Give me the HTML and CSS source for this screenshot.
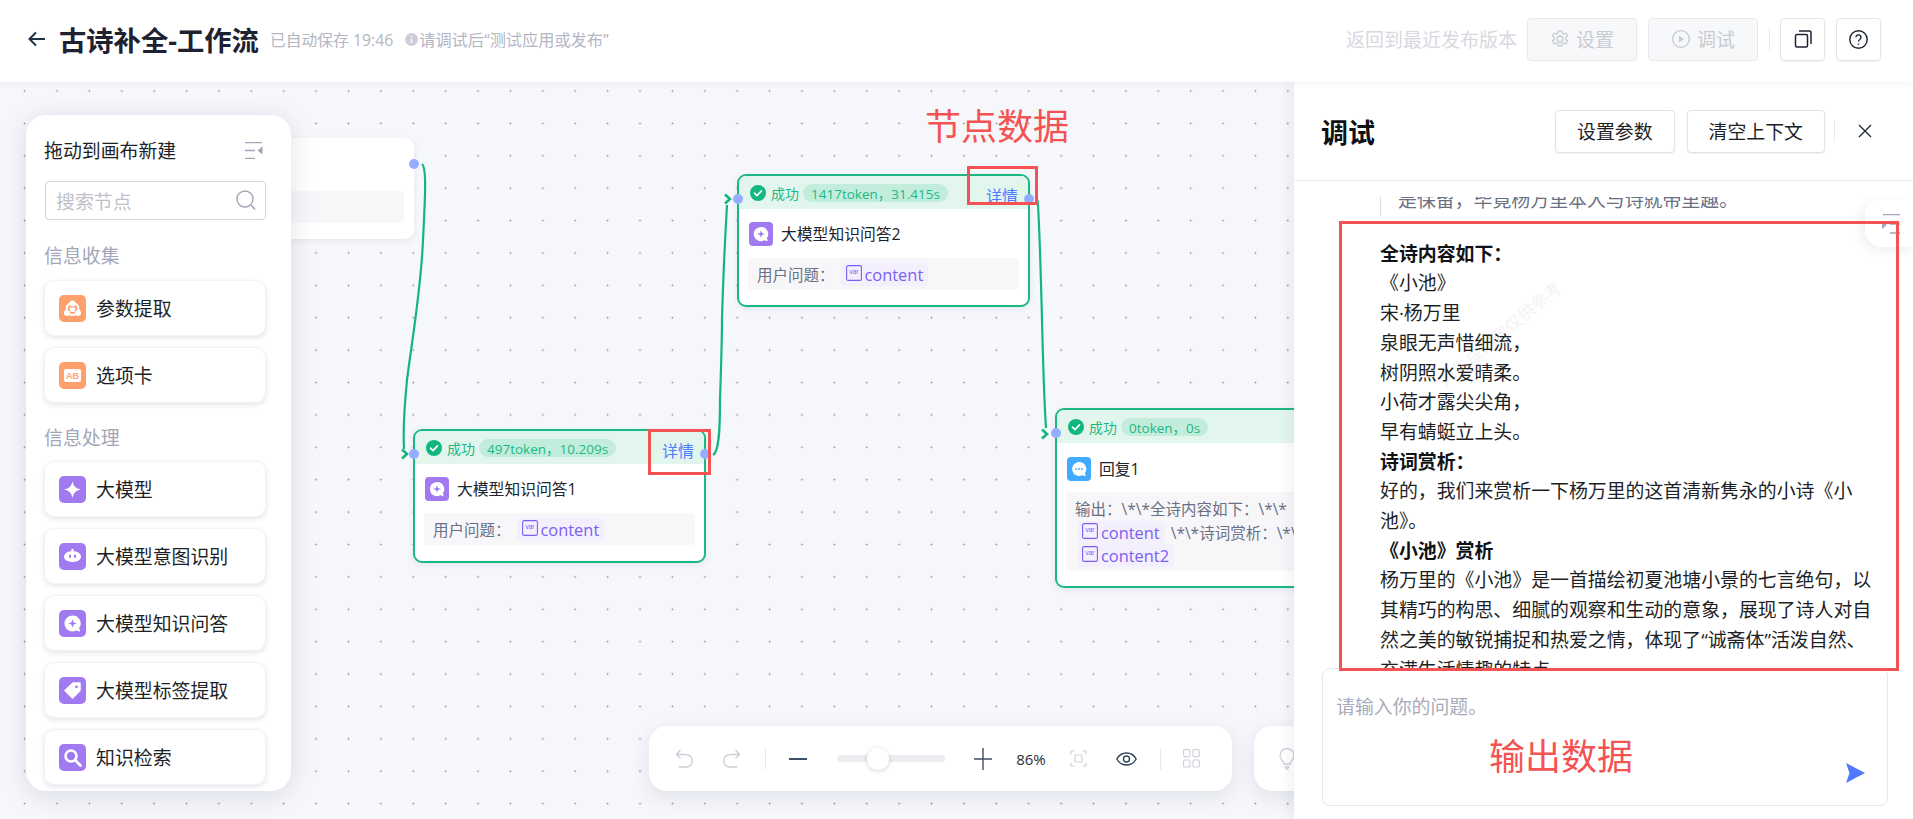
FILE: index.html
```html
<!DOCTYPE html>
<html lang="zh-CN">
<head>
<meta charset="utf-8">
<title>古诗补全-工作流</title>
<link rel="stylesheet" href="styles.css">
</head>
<body>
<svg class="sprite" width="0" height="0">
  <defs>
    <symbol id="qa" viewBox="0 0 27 27"><path d="M13.5 5.5a8 8 0 1 0 3.6 15.1l4 1.1-.9-3.6a8 8 0 0 0-6.700-12.600z" fill="#fff"/><path d="M13.500 9.200l1.100 3.200 3.200 1.100-3.200 1.100-1.100 3.200-1.100-3.200-3.200-1.100 3.200-1.100z" fill="#a179f0"/></symbol>
    <symbol id="var" viewBox="0 0 16 16"><rect x=".6" y=".6" width="14.800" height="14.800" rx="1.500" fill="none" stroke="#7b5ff0" stroke-width="1.100"/><text x="8" y="8.500" text-anchor="middle" font-size="6.500" font-family="Liberation Sans" fill="#7b5ff0">var</text></symbol>
    <symbol id="check" viewBox="0 0 16 16"><circle cx="8" cy="8" r="8" fill="#14b67f"/><path d="M4.500 8.200l2.500 2.400 4.500-4.700" fill="none" stroke="#fff" stroke-width="1.600" stroke-linecap="round" stroke-linejoin="round"/></symbol>
  </defs>
</svg>

<header class="topbar">
  <svg class="back" width="18" height="16" viewBox="0 0 18 16"><path d="M17 8H1.500M8 1.500L1.500 8 8 14.500" fill="none" stroke="#1d3147" stroke-width="2"/></svg>
  <h1 class="app-title">古诗补全-工作流</h1>
  <span class="save-time">已自动保存 19:46</span>
  <svg class="info" width="13" height="13" viewBox="0 0 13 13"><circle cx="6.500" cy="6.500" r="6.500" fill="#ccced9"/><path d="M6.500 3v1.200M6.500 5.500V10" stroke="#fff" stroke-width="1.300"/></svg>
  <span class="save-hint">请调试后“测试应用或发布”</span>
  <span class="revert">返回到最近发布版本</span>
  <button class="tb-btn">
    <svg width="20" height="20" viewBox="0 0 20 20" fill="none" stroke="#c6c8d2" stroke-width="1.300"><circle cx="10" cy="10" r="3"/><path d="M8.400 1.800h3.200l.5 2.400 1.500.8 2.300-.8 1.600 2.800-1.800 1.600v1.800l1.800 1.600-1.600 2.800-2.300-.8-1.500.8-.5 2.400H8.400l-.5-2.400-1.500-.8-2.300.8-1.600-2.800 1.800-1.600V8.600L2.500 7l1.600-2.800 2.300.8 1.500-.8z" stroke-linejoin="round"/></svg>
    设置
  </button>
  <button class="tb-btn">
    <svg width="20" height="20" viewBox="0 0 20 20"><circle cx="10" cy="10" r="8.300" fill="none" stroke="#c6c8d2" stroke-width="1.300"/><path d="M8 6.500l5 3.500-5 3.500z" fill="#c6c8d2"/></svg>
    调试
  </button>
  <i class="vline tb-line"></i>
  <button class="icon-btn">
    <svg width="18" height="18" viewBox="0 0 18 18" fill="none" stroke="#1d2433" stroke-width="1.500"><rect x="1.500" y="4.500" width="12" height="12.500" rx="1.500"/><path d="M5 1h10.500A1.500 1.500 0 0 1 17 2.500V14"/></svg>
  </button>
  <button class="icon-btn">
    <svg width="19" height="19" viewBox="0 0 19 19" fill="none" stroke="#1d2433" stroke-width="1.400"><circle cx="9.500" cy="9.500" r="8.700"/><path d="M7 7.300a2.500 2.500 0 1 1 3.800 2.200c-.9.500-1.300 1-1.300 2.100M9.500 13.400v1.400"/></svg>
  </button>
</header>

<main class="workspace">
  <section class="canvas">
    <svg class="edges" width="1294" height="737" viewBox="0 82 1294 737" fill="none" stroke="#14b67f" stroke-width="2.200">
      <path d="M422 164C427 168 425 200 423 240C421 290 412 340 407 380C404 410 403 430 404 449"/>
      <path d="M402 449.500l5 4.500-5 4.500" stroke-width="2.600"/>
      <path d="M713 455C719 452 720 430 720 400C721 370 722 340 722 320C723 280 725 240 727 205"/>
      <path d="M725 194.500l5 4.500-5 4.500" stroke-width="2.600"/>
      <path d="M1036 198C1038 200 1038 203 1038 205C1040 240 1041 280 1042 320C1043 360 1044 400 1046 428"/>
      <path d="M1042 429.500l5 4.500-5 4.500" stroke-width="2.600"/>
    </svg>

    <div class="node node-ghost">
      <div class="param-row ghost-row"></div>
      <i class="port port-r"></i>
    </div>

    <article class="node node-qa1 done">
      <div class="node-status">
        <svg width="16" height="16"><use href="#check"/></svg>
        <span class="status-label">成功</span>
        <span class="status-pill">497token，10.209s</span>
        <span class="details">详情</span>
      </div>
      <div class="node-head">
        <svg class="node-ico purple" width="24" height="24"><use href="#qa"/></svg>
        <span class="node-title">大模型知识问答1</span>
      </div>
      <div class="param-row">
        <span>用户问题：</span>
        <span class="var-tag"><svg width="16" height="16"><use href="#var"/></svg>content</span>
      </div>
      <i class="port port-l"></i><i class="port port-r"></i>
    </article>

    <article class="node node-qa2 done">
      <div class="node-status">
        <svg width="16" height="16"><use href="#check"/></svg>
        <span class="status-label">成功</span>
        <span class="status-pill">1417token，31.415s</span>
        <span class="details">详情</span>
      </div>
      <div class="node-head">
        <svg class="node-ico purple" width="24" height="24"><use href="#qa"/></svg>
        <span class="node-title">大模型知识问答2</span>
      </div>
      <div class="param-row">
        <span>用户问题：</span>
        <span class="var-tag"><svg width="16" height="16"><use href="#var"/></svg>content</span>
      </div>
      <i class="port port-l"></i><i class="port port-r"></i>
    </article>

    <article class="node node-reply done">
      <div class="node-status">
        <svg width="16" height="16"><use href="#check"/></svg>
        <span class="status-label">成功</span>
        <span class="status-pill">0token，0s</span>
      </div>
      <div class="node-head">
        <svg class="node-ico blue" width="24" height="24" viewBox="0 0 24 24"><path d="M12 5a7 7 0 1 0 3.200 13.300l3.600 1-.9-3.200A7 7 0 0 0 12 5z" fill="#fff"/><circle cx="9" cy="12" r="1" fill="#42aaff"/><circle cx="12" cy="12" r="1" fill="#42aaff"/><circle cx="15" cy="12" r="1" fill="#42aaff"/></svg>
        <span class="node-title">回复1</span>
      </div>
      <div class="param-row reply-row">
        <div class="reply-line first">输出：\*\*全诗内容如下：\*\*</div>
        <div class="reply-line"><span class="var-tag"><svg width="16" height="16"><use href="#var"/></svg>content</span><span class="after-tag">\*\*诗词赏析：\*\*</span></div>
        <div class="reply-line"><span class="var-tag"><svg width="16" height="16"><use href="#var"/></svg>content2</span></div>
      </div>
      <i class="port port-l"></i>
    </article>

    <aside class="palette">
      <div class="palette-head">
        <span>拖动到画布新建</span>
        <svg width="18" height="17" viewBox="0 0 18 17" fill="none" stroke="#a2a6b8" stroke-width="1.300"><path d="M0 .7h17M0 8.500h10M0 16.300h10"/><path d="M17.500 4.500v8L12.500 8.500z" fill="#a2a6b8" stroke="none"/></svg>
      </div>
      <div class="search">
        <span>搜索节点</span>
        <svg width="20" height="21" viewBox="0 0 20 21" fill="none" stroke="#a2a6b8" stroke-width="1.400"><circle cx="9" cy="9" r="8"/><path d="M15 15l4 4.500"/></svg>
      </div>
      <h2 class="group-title">信息收集</h2>
      <div class="tool">
        <svg class="tool-ico orange" width="27" height="27" viewBox="0 0 27 27"><circle cx="13.500" cy="14" r="6" fill="none" stroke="#fff" stroke-width="2.200"/><circle cx="13.500" cy="8.500" r="3" fill="#fff"/><circle cx="8" cy="18" r="3" fill="#fff"/><circle cx="19" cy="18" r="3" fill="#fff"/><path d="M10.500 12.500h6l-1 4.500h-4z" fill="#fff"/></svg>
        <span>参数提取</span>
      </div>
      <div class="tool">
        <svg class="tool-ico orange" width="27" height="27" viewBox="0 0 27 27"><rect x="5" y="7" width="17" height="13" rx="2" fill="#fff"/><text x="13.500" y="17" text-anchor="middle" font-size="9" font-weight="700" font-family="Liberation Sans" fill="#ffa574">AB</text></svg>
        <span>选项卡</span>
      </div>
      <h2 class="group-title second">信息处理</h2>
      <div class="tool">
        <svg class="tool-ico purple" width="27" height="27" viewBox="0 0 27 27"><path d="M13.500 5c.8 5 3.500 7.700 8.500 8.500-5 .8-7.700 3.500-8.500 8.500-.8-5-3.500-7.700-8.500-8.500 5-.8 7.700-3.500 8.500-8.500z" fill="#fff"/></svg>
        <span>大模型</span>
      </div>
      <div class="tool">
        <svg class="tool-ico purple" width="27" height="27" viewBox="0 0 27 27"><circle cx="13.500" cy="7" r="1.300" fill="#fff"/><path d="M13.500 8c5 0 8.500 2.800 8.500 5.800s-3.500 5.200-8.500 5.200S5 16.800 5 13.800 8.500 8 13.500 8z" fill="#fff"/><rect x="10" y="11.500" width="2" height="3.500" rx="1" fill="#a179f0"/><rect x="15" y="11.500" width="2" height="3.500" rx="1" fill="#a179f0"/></svg>
        <span>大模型意图识别</span>
      </div>
      <div class="tool">
        <svg class="tool-ico purple" width="27" height="27"><use href="#qa"/></svg>
        <span>大模型知识问答</span>
      </div>
      <div class="tool">
        <svg class="tool-ico purple" width="27" height="27" viewBox="0 0 27 27"><path d="M14 6h7v7.500L13.500 21 6 13.500z" fill="#fff" stroke="#fff" stroke-width="1.500" stroke-linejoin="round"/><circle cx="17.500" cy="9.800" r="1.400" fill="#a179f0"/></svg>
        <span>大模型标签提取</span>
      </div>
      <div class="tool">
        <svg class="tool-ico purple" width="27" height="27" viewBox="0 0 27 27"><circle cx="12" cy="12" r="5.500" fill="none" stroke="#fff" stroke-width="2.600"/><path d="M16.500 16.500l5 5" stroke="#fff" stroke-width="2.800" stroke-linecap="round"/></svg>
        <span>知识检索</span>
      </div>
    </aside>

    <div class="toolbar">
      <svg class="t-undo" width="18" height="20" viewBox="0 0 18 20" fill="none" stroke="#ccced8" stroke-width="1.300"><path d="M5.500 1L1.500 5.500 5.500 9.500M2 5.500h9a5.500 5.500 0 0 1 0 12.500H3.500"/></svg>
      <svg class="t-redo" width="18" height="20" viewBox="0 0 18 20" fill="none" stroke="#ccced8" stroke-width="1.300"><path d="M12.500 1l4 4.500-4 4M16 5.500H7a5.500 5.500 0 0 0 0 12.500h7.500"/></svg>
      <i class="vline t-line1"></i>
      <svg class="t-minus" width="18" height="2" viewBox="0 0 18 2"><path d="M0 1h18" stroke="#3f4f64" stroke-width="2"/></svg>
      <div class="slider"><i class="thumb"></i></div>
      <svg class="t-plus" width="18" height="22" viewBox="0 0 18 22"><path d="M0 11h18M9 0v22" stroke="#3f4f64" stroke-width="1.400"/></svg>
      <span class="zoom-value">86%</span>
      <svg class="t-fit" width="17" height="17" viewBox="0 0 17 17" fill="none" stroke="#d0d2db" stroke-width="1.200"><path d="M1 4.500V1h3.500M12.500 1H16v3.500M16 12.500V16h-3.500M4.500 16H1v-3.500"/><rect x="5" y="5" width="7" height="7" rx="1"/></svg>
      <svg class="t-eye" width="21" height="14" viewBox="0 0 21 14" fill="none" stroke="#33475b" stroke-width="1.400"><path d="M.8 7C3 3 6.500 1 10.500 1s7.500 2 9.700 6c-2.200 4-5.700 6-9.700 6S3 11 .8 7z"/><circle cx="10.500" cy="7" r="3"/></svg>
      <i class="vline t-line2"></i>
      <svg class="t-grid" width="17" height="19" viewBox="0 0 17 19" fill="none" stroke="#d0d2db" stroke-width="1.200"><rect x=".6" y=".6" width="6.300" height="7" rx="1"/><rect x="10" y=".6" width="6.300" height="7" rx="1"/><rect x=".6" y="11" width="6.300" height="7" rx="1"/><rect x="10" y="11" width="6.300" height="7" rx="1"/></svg>
    </div>
    <div class="toolbar-tip">
      <svg width="16" height="22" viewBox="0 0 16 22" fill="none" stroke="#ccced8" stroke-width="1.300"><path d="M5 16c0-2.500-4-4-4-8.500a7 7 0 0 1 14 0C15 12 11 13.500 11 16zM5.500 19h5M6.500 21h3"/></svg>
    </div>
  </section>

  <section class="debug">
    <div class="debug-head">
      <h2 class="debug-title">调试</h2>
      <button class="outline-btn">设置参数</button>
      <button class="outline-btn">清空上下文</button>
      <i class="vline head-line"></i>
      <svg class="close" width="14" height="14" viewBox="0 0 14 14"><path d="M1 1l12 12M13 1L1 13" stroke="#1d2433" stroke-width="1.300"/></svg>
    </div>
    <div class="chat">
      <blockquote class="quote">是保留，毕竟杨万里本人与诗就带里趣。</blockquote>
      <div class="answer">
        <p class="strong">全诗内容如下：</p>
        <p>《小池》</p>
        <p>宋·杨万里</p>
        <p>泉眼无声惜细流，</p>
        <p>树阴照水爱晴柔。</p>
        <p>小荷才露尖尖角，</p>
        <p>早有蜻蜓立上头。</p>
        <p class="strong">诗词赏析：</p>
        <p>好的，我们来赏析一下杨万里的这首清新隽永的小诗《小池》。</p>
        <p class="strong">《小池》赏析</p>
        <p>杨万里的《小池》是一首描绘初夏池塘小景的七言绝句，以其精巧的构思、细腻的观察和生动的意象，展现了诗人对自然之美的敏锐捕捉和热爱之情，体现了“诚斋体”活泼自然、充满生活情趣的特点。</p>
      </div>
      <span class="watermark">AI生成内容仅供参考</span>
    </div>
    <div class="composer">
      <span class="placeholder">请输入你的问题。</span>
      <svg class="send" width="19" height="20" viewBox="0 0 19 20"><path d="M0 0l19 10L0 20l3.500-10z" fill="#4d78ff"/></svg>
    </div>
    <div class="side-tab">
      <svg width="18" height="20" viewBox="0 0 18 20" fill="none" stroke="#a2a6b8" stroke-width="1.300"><path d="M1 .7h17M8 10h10M8 19h10"/><path d="M0 7v8l5-4z" fill="#a2a6b8" stroke="none"/></svg>
    </div>
  </section>

  <div class="mark mark-1"></div>
  <div class="mark mark-2"></div>
  <div class="mark mark-3"></div>
  <span class="note note-1">节点数据</span>
  <span class="note note-2">输出数据</span>
</main>
</body>
</html>
```

FILE: styles.css
```css
* { box-sizing: border-box; }
html, body { height: 100%; }
body {
  margin: 0;
  overflow: hidden;
  display: flex;
  flex-direction: column;
  background: #fff;
  color: #1d1f26;
  font-family: "Open Sans", "Noto Sans CJK SC", sans-serif;
}
h1, h2, p, blockquote { margin: 0; font-weight: 400; }
button { font-family: inherit; cursor: pointer; }
.sprite { position: absolute; }
.vline { display: block; width: 1px; background: #e9eaef; }

/* top bar */
.topbar {
  flex: none;
  height: 82px;
  display: flex;
  align-items: center;
  padding: 0 32px 4px 28px;
  background: #fff;
  box-shadow: 0 1px 6px rgba(40, 50, 90, .06);
  position: relative;
  z-index: 5;
}
.back { margin-right: 13px; }
.app-title { font-size: 27.300px; font-weight: 700; color: #1d2130; margin-right: 11px; white-space: nowrap; }
.save-time { font-size: 15.800px; color: #b4b6c4; margin-right: 12px; }
.info { margin-right: 1px; }
.save-hint { font-size: 16.200px; color: #b4b6c4; }
.revert { margin-left: auto; margin-right: 10px; font-size: 19px; color: #d8d9e0; }
.tb-btn {
  width: 110px;
  height: 43px;
  margin-right: 11px;
  display: flex;
  align-items: center;
  justify-content: center;
  gap: 6px;
  font-size: 19px;
  color: #c9cbd4;
  background: #f7f8fa;
  border: 1px solid #e8e9ee;
  border-radius: 4px;
}
.tb-line { height: 22px; margin: 0 10px 0 0; }
.icon-btn {
  width: 45px;
  height: 43px;
  margin-right: 11px;
  display: flex;
  align-items: center;
  justify-content: center;
  padding: 0;
  background: #fff;
  border: 1px solid #e4e5eb;
  border-radius: 4px;
  box-shadow: 0 1px 2px rgba(30, 40, 80, .06);
}
.icon-btn:last-child { margin-right: 0; }

/* workspace */
.workspace { flex: 1; min-height: 0; display: flex; position: relative; }
.canvas {
  flex: 1;
  min-width: 0;
  position: relative;
  overflow: hidden;
  background-color: #f6f7fb;
  background-image: radial-gradient(circle, #8f909c .8px, transparent 1.100px);
  background-size: 32.400px 32.400px;
  background-position: 8.400px -7.200px;
}
.edges { position: absolute; left: 0; top: 0; }

/* nodes */
.node {
  position: absolute;
  width: 293px;
  background: #fff;
  border-radius: 9px;
  box-shadow: 0 2px 6px rgba(40, 50, 90, .08);
}
.node.done { border: 2px solid #1cb884; }
.node-ghost { left: 121px; top: 56px; height: 101px; padding: 53px 10px 0; }
.ghost-row { height: 33px; }
.node-qa1 { left: 413px; top: 347px; height: 134px; }
.node-qa2 { left: 737px; top: 92px; height: 133px; }
.node-reply { left: 1055px; top: 326px; height: 180px; width: 320px; }
.node-status {
  height: 33px;
  display: flex;
  align-items: center;
  padding: 0 10px 0 11px;
  background: #e3f6ee;
  border-radius: 7px 7px 0 0;
  font-size: 14px;
  color: #1cb884;
}
.status-label { margin: 0 4px 0 5px; }
.status-pill {
  height: 18px;
  display: flex;
  align-items: center;
  padding: 0 8px;
  border-radius: 9px;
  background: #c2ecdc;
  font-size: 13.500px;
  white-space: nowrap;
}
.details { margin-left: auto; padding-top: 4px; font-size: 16px; color: #4d7cff; }
.node-head { height: 49px; display: flex; align-items: center; padding: 0 10px; }
.node-ico { flex: none; border-radius: 4px; margin-right: 8px; }
.node-title { font-size: 15.800px; color: #20232c; }
.node-reply .node-head { padding-top: 2px; }
.purple { background: #a179f0; }
.orange { background: #ff9f6b; }
.blue { background: #42aaff; }
.param-row {
  margin: 0 9px;
  height: 32px;
  display: flex;
  align-items: center;
  gap: 6px;
  padding: 1px 9px 0;
  background: #f7f7fa;
  border-radius: 4px;
  font-size: 15.500px;
  color: #6b6f83;
  white-space: nowrap;
}
.ghost-row { margin: 0; }
.var-tag {
  display: inline-flex;
  align-items: center;
  gap: 3px;
  height: 23px;
  padding: 0 5px;
  border-radius: 4px;
  background: #f4effd;
  color: #7b5ff0;
  font-size: 16.400px;
  line-height: 23px;
}
.var-tag svg { margin-top: -3px; }
.reply-row { display: block; height: 79px; padding: 6px 0 0 9px; }
.reply-line { height: 23px; line-height: 23px; }
.reply-line .var-tag { margin-left: 2px; }
.after-tag { margin-left: 6px; }
.port {
  position: absolute;
  top: 18px;
  width: 10px;
  height: 10px;
  border-radius: 50%;
  background: #94adff;
  z-index: 2;
}
.port-l { left: -6px; }
.port-r { right: -6px; }
.node-ghost .port-r { top: 21px; right: -5px; }

/* palette */
.palette {
  position: absolute;
  left: 26px;
  top: 33px;
  width: 265px;
  height: 676px;
  padding: 0 25px 0 18px;
  overflow: hidden;
  background: #fff;
  border-radius: 20px;
  box-shadow: 0 4px 26px rgba(25, 35, 80, .13);
  z-index: 3;
}
.palette-head {
  height: 64px;
  padding: 6px 3px 0 0;
  display: flex;
  align-items: center;
  justify-content: space-between;
  font-size: 18.900px;
  color: #1d1f26;
}
.search {
  height: 39px;
  margin: 2px 0 0 1px;
  padding: 0 9px 0 10px;
  display: flex;
  align-items: center;
  justify-content: space-between;
  font-size: 18.900px;
  color: #bfc1c9;
  border: 1px solid #d4d5da;
  border-radius: 4px;
}
.group-title { margin-top: 20px; height: 32px; line-height: 32px; font-size: 18.900px; color: #a2a6b8; }
.group-title.second { margin-top: 19px; height: 31px; }
.tool {
  height: 56px;
  margin-top: 11px;
  display: flex;
  align-items: center;
  gap: 10px;
  padding: 0 14px;
  font-size: 18.900px;
  color: #1d1f26;
  background: #fff;
  border: 1px solid #f2f3f7;
  border-radius: 10px;
  box-shadow: 0 2px 5px rgba(30, 40, 80, .12);
}
.group-title + .tool { margin-top: 8px; }
.tool-ico { flex: none; border-radius: 5px; }

/* bottom toolbar */
.toolbar, .toolbar-tip {
  position: absolute;
  top: 644px;
  height: 65px;
  background: #fff;
  border-radius: 18px;
  box-shadow: 0 6px 20px rgba(25, 35, 80, .1);
}
.toolbar {
  left: 649px;
  width: 583px;
  display: flex;
  align-items: center;
  z-index: 2;
}
.toolbar-tip {
  left: 1254px;
  width: 120px;
  padding: 22px 0 0 25px;
  z-index: 2;
}
.t-undo { margin-left: 26px; }
.t-redo { margin-left: 30px; }
.t-line1 { height: 22px; margin-left: 24px; }
.t-minus { margin-left: 23px; }
.slider {
  position: relative;
  width: 108px;
  height: 7px;
  margin-left: 30px;
  border-radius: 4px;
  background: #ecedf1;
}
.thumb {
  position: absolute;
  left: 30px;
  top: -7px;
  width: 22px;
  height: 22px;
  border-radius: 50%;
  background: #fff;
  box-shadow: 0 1px 5px rgba(30, 40, 80, .2);
}
.t-plus { margin-left: 29px; }
.zoom-value { width: 60px; text-align: center; margin-left: 9px; font-size: 15px; color: #2a2d36; }
.t-fit { margin-left: 9px; }
.t-eye { margin-left: 29px; }
.t-line2 { height: 22px; margin-left: 23px; }
.t-grid { margin-left: 22px; }

/* debug panel */
.debug {
  flex: none;
  width: 619px;
  position: relative;
  display: flex;
  flex-direction: column;
  background: #fff;
  box-shadow: -5px 0 12px rgba(30, 40, 80, .06);
  z-index: 4;
}
.debug-head {
  flex: none;
  height: 99px;
  display: flex;
  align-items: center;
  padding: 0 41px 0 27px;
  border-bottom: 1px solid #e9eaef;
}
.debug-title { font-size: 27px; font-weight: 700; color: #0f1116; margin-right: auto; }
.outline-btn {
  height: 43px;
  padding: 0 21px;
  margin-left: 12px;
  font-size: 18.900px;
  color: #1d1f26;
  background: #fff;
  border: 1px solid #e2e3e9;
  border-radius: 4px;
  box-shadow: 0 1px 2px rgba(30, 40, 80, .06);
}
.head-line { height: 22px; margin: 0 23px 0 9px; }
.chat {
  flex: 1;
  min-height: 0;
  position: relative;
  margin-top: 16px;
  padding: 0 41px 0 86px;
  overflow: hidden;
  font-size: 18.900px;
  line-height: 29.700px;
  color: #1d1f26;
}
.quote {
  position: relative;
  z-index: 1;
  margin-top: -11px;
  padding-left: 17px;
  border-left: 1px solid #dcdde3;
  color: #6b6f83;
}
.answer { position: relative; z-index: 1; margin-top: 24px; }
.strong { font-weight: 700; color: #101216; }
.watermark {
  position: absolute;
  left: 131px;
  top: 128px;
  font-size: 17px;
  line-height: 1;
  color: #f3f3f5;
  transform: rotate(-40deg);
  white-space: nowrap;
}
.composer {
  flex: none;
  position: relative;
  height: 138px;
  margin: 0 25px 13px 28px;
  padding: 24px 13px;
  border: 1px solid #e4e6f0;
  border-radius: 8px;
  font-size: 18.900px;
  color: #a8abba;
}
.placeholder { display: block; line-height: 28px; }
.send { position: absolute; right: 22px; bottom: 22px; }
.side-tab {
  position: absolute;
  right: 0;
  top: 117px;
  width: 48px;
  height: 48px;
  padding: 15px 0 0 17px;
  background: #fff;
  border-radius: 16px 0 0 16px;
  box-shadow: -3px 3px 12px rgba(30, 40, 80, .08);
}

/* annotations */
.mark { position: absolute; border: 3px solid #f55353; pointer-events: none; z-index: 6; }
.mark-1 { left: 967px; top: 84px; width: 71px; height: 39px; }
.mark-2 { left: 648px; top: 347px; width: 63px; height: 46px; }
.mark-3 { left: 1339px; top: 139px; width: 560px; height: 450px; }
.note { position: absolute; font-size: 36px; line-height: 1; color: #f55353; z-index: 6; white-space: nowrap; }
.note-1 { left: 925px; top: 27px; }
.note-2 { left: 1489px; top: 657px; }
```
